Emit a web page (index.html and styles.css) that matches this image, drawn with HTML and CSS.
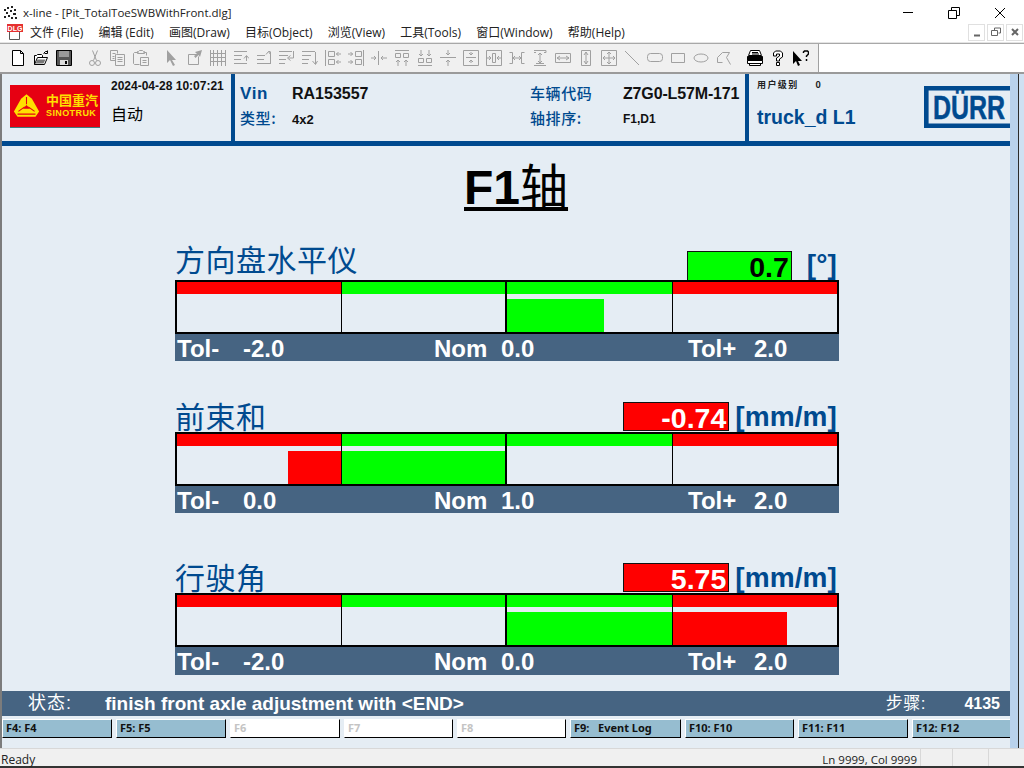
FILE: index.html

```html
<!doctype html>
<html lang="en">
<head>
  <meta charset="UTF-8">
  <title>x-line - [Pit_TotalToeSWBWithFront.dlg]</title>
  <link rel="stylesheet" href="styles.css">
</head>
<body>
  <svg class="defs" width="0" height="0">
    <symbol id="i-new" viewBox="0 0 16 16"><path d="M2.500 .5h8l3 3v12h-11zM10.500 .5v3h3" fill="#fff" stroke="#000"/></symbol>
    <symbol id="i-open" viewBox="0 0 16 16"><path d="M1.500 14.500v-9h2l1-1h4l1 1v2M1.500 14.500l3-7h10l-3 7z" fill="#fff" stroke="#000"/><path d="M4.500 9.500h8l-2 4h-8z" fill="#777"/><path d="M10.500 3.500l2-2h2M14.500 .5v3h-3" fill="none" stroke="#000"/></symbol>
    <symbol id="i-save" viewBox="0 0 16 16"><path d="M.5 .5h15v15h-15z" fill="#555" stroke="#000"/><path d="M3 1h10v6h-10z" fill="#999"/><path d="M4 10h8v5h-8z" fill="#ddd"/><path d="M9 11h2v3h-2z" fill="#000"/></symbol>
    <symbol id="i-cut" viewBox="0 0 16 16"><path d="M5.500 .5l4 10M10.500 .5l-4 10" /><circle cx="5" cy="13" r="2.500"/><circle cx="11" cy="13" r="2.500"/></symbol>
    <symbol id="i-copy" viewBox="0 0 16 16"><path d="M.5 .5h7v3M.5 .5v10h5M6.500 4.500h8v11h-9v-11zM2.500 3.500h3M2.500 6.500h2M2.500 8.500h2M7.500 7.500h5M7.500 9.500h5M7.500 11.500h5"/></symbol>
    <symbol id="i-paste" viewBox="0 0 16 16"><path d="M5.500 2.500h-4l-1 1v10l1 1h5M10.500 2.500h3v3M4.500 3.500v-2h1l1-1h3l1 1h1v2zM7.500 7.500h8v8h-8zM9.500 10.500h4M9.500 12.500h4"/></symbol>
    <symbol id="i-arrow" viewBox="0 0 16 16"><path d="M3 0v13l3-3 3 6 2-1-3-5h4z" fill="#a0a0a0" stroke="none"/></symbol>
    <symbol id="i-object" viewBox="0 0 16 16"><path d="M1.500 4.500h9M1.500 4.500v10h10v-8"/><path d="M8 2l7-2-2 7-1.500-2-3 3-1.500-2 3-2z" fill="#a0a0a0" stroke="none"/></symbol>
    <symbol id="i-grid" viewBox="0 0 16 16"><path d="M3.500 0v16M7.500 0v16M11.500 0v16M0 3.500h16M0 7.500h16M0 11.500h16M.5 0v16M15.500 0v16"/></symbol>
    <symbol id="i-a1" viewBox="0 0 16 16"><path d="M1 1.500h13M1 5.500h8M1 9.500h7M1 13.500h13M13.500 11v-5M11 8.500l2.500-3 2.500 3"/></symbol>
    <symbol id="i-a2" viewBox="0 0 16 16"><path d="M1 5.500h8M1 9.500h7M1 13.500h14M14.500 13v-11M12.500 1.500h2M10 4.500l2.500-3 2 3"/></symbol>
    <symbol id="i-a3" viewBox="0 0 16 16"><path d="M0 1.500h13M0 5.500h9M0 9.500h7M0 13.500h6M14.500 1v7h-5M11.500 5.500l-3 2.500 3 2.500"/></symbol>
    <symbol id="i-a4" viewBox="0 0 16 16"><path d="M0 1.500h13M0 5.500h9M0 9.500h7M0 13.500h6M13.500 2v12M10.500 11l3 3.500 2-3.500"/></symbol>
    <symbol id="i-b1" viewBox="0 0 16 16"><path d="M.5 0v16M3.500 1.500h6v5h-6zM3.500 9.500h6v5h-6zM11 4h5M11.500 4l2-2M11.500 4l2 2M11 12h5M11.500 12l2-2M11.500 12l2 2"/></symbol>
    <symbol id="i-b2" viewBox="0 0 16 16"><path d="M15.500 0v16M7.500 1.500h6v5h-6zM7.500 9.500h6v5h-6zM0 4h5M4.500 4l-2-2M4.500 4l-2 2M0 12h5M4.500 12l-2-2M4.500 12l-2 2"/></symbol>
    <symbol id="i-b3" viewBox="0 0 16 16"><path d="M7.500 1v14M0 8h5M5 8l-2-2M5 8l-2 2M10 8h6M10 8l2-2M10 8l2 2"/></symbol>
    <symbol id="i-c1" viewBox="0 0 16 16"><path d="M1 .5h14M1.500 3.500h5v4h-5zM9.500 3.500h5v4h-5zM4 10v6M4 10l-2 2M4 10l2 2M12 10v6M12 10l-2 2M12 10l2 2"/></symbol>
    <symbol id="i-c2" viewBox="0 0 16 16"><path d="M1 15.500h14M1.500 8.500h5v4h-5zM9.500 8.500h5v4h-5zM4 0v6M4 6l-2-2M4 6l2-2M12 0v6M12 6l-2-2M12 6l2-2"/></symbol>
    <symbol id="i-c3" viewBox="0 0 16 16"><path d="M0 7.500h16M8 0v5M8 5l-2-2M8 5l2-2M8 10v6M8 10l-2 2M8 10l2 2"/></symbol>
    <symbol id="i-d1" viewBox="0 0 16 16"><path d="M.5 .5h15v15h-15zM3 7.500h10M8 2v3M8 5l-2-2M8 5l2-2M8 10v3M8 10l-2 2M8 10l2 2"/></symbol>
    <symbol id="i-d2" viewBox="0 0 16 16"><path d="M.5 .5h15v15h-15zM6.500 3.500h3v9h-3zM1 8h4M5 8l-2-2M5 8l-2 2M11 8h4M11 8l2-2M11 8l2 2"/></symbol>
    <symbol id="i-e1" viewBox="0 0 16 16"><path d="M.5 2.500h3v11h-3M15.500 2.500h-3v11h3M4 8h8M4 8l2-2M4 8l2 2M12 8l-2-2M12 8l-2 2"/></symbol>
    <symbol id="i-e2" viewBox="0 0 16 16"><path d="M2 .5h12v2h-2M4 2.500h-2M2 15.500h12M4 13.500h8M8 3v10M8 3l-2 2M8 3l2 2M8 13l-2-2M8 13l2-2"/></symbol>
    <symbol id="i-e3" viewBox="0 0 16 16"><path d="M.5 3.500h15v9h-15zM2 8h12M2 8l3-2M2 8l3 2M14 8l-3-2M14 8l-3 2"/></symbol>
    <symbol id="i-e4" viewBox="0 0 16 16"><path d="M3.500 .5h9v15h-9zM8 2v12M8 2l-2 3M8 2l2 3M8 14l-2-3M8 14l2-3"/></symbol>
    <symbol id="i-e5" viewBox="0 0 16 16"><path d="M.5 .5h15v15h-15zM2 8h12M8 2v12M2 8l2-2M2 8l2 2M14 8l-2-2M14 8l-2 2M8 2l-2 2M8 2l2 2M8 14l-2-2M8 14l2-2"/></symbol>
    <symbol id="i-line" viewBox="0 0 16 16"><path d="M1 1l14 14"/></symbol>
    <symbol id="i-round" viewBox="0 0 16 16"><rect x=".5" y="3.500" width="15" height="8" rx="3"/></symbol>
    <symbol id="i-rect" viewBox="0 0 16 16"><path d="M1.500 3.500h13v9h-13z"/></symbol>
    <symbol id="i-oval" viewBox="0 0 16 16"><ellipse cx="8" cy="8" rx="7" ry="4"/></symbol>
    <symbol id="i-poly" viewBox="0 0 16 16"><path d="M6.500 2.500h7l-3 5 4 7M6.500 2.500l-5 5v5h5"/></symbol>
    <symbol id="i-print" viewBox="0 0 16 16"><path d="M3.500 .5h9l2 5h-13zM5 2.500h6M5 4h7" fill="#fff" stroke="#000"/><path d="M.5 6.500h15v4h-15z" fill="#000" stroke="#000"/><path d="M.5 10.500h15v3h-15zM2.500 13.500h11v2h-11z" fill="#fff" stroke="#000"/></symbol>
    <symbol id="i-help" viewBox="0 0 16 16"><path d="M3.500 6v-3l2-2h5l2 2v4l-3 2v2h-3v-3l3-2v-2h-3v2z" fill="#fff" stroke="#000"/><path d="M6.500 12.500h3v3h-3z" fill="#fff" stroke="#000"/></symbol>
    <symbol id="i-whats" viewBox="0 0 16 16"><path d="M0 1v13l3-3 2 5 2-1-2-4h4z" fill="#000"/><path d="M10.500 3v-1l1-1h3l1 1v2l-2 2v1M13.500 9v2" fill="none" stroke="#000" stroke-width="1.500"/></symbol>
  </svg>

  <div class="titlebar">
    <svg class="app-icon" viewBox="0 0 14 14" width="14" height="14"><path d="M1 3h2v2h-2zM4 1h2v2h-2zM8 0h2v2h-2zM11 3h2v2h-2zM3 6h2v2h-2zM7 4h2v2h-2zM10 7h3v2h-3zM1 10h2v2h-2zM5 9h2v2h-2zM8 11h2v2h-2zM12 11h2v2h-2z" fill="#222"/></svg>
    <span class="app-name">x-line - [Pit_TotalToeSWBWithFront.dlg]</span>
    <div class="win-btns">
      <svg viewBox="0 0 10 10" width="10" height="10"><path d="M0 5.500h10" stroke="#000" fill="none"/></svg>
      <svg viewBox="0 0 12 12" width="12" height="12"><path d="M.5 3.500h8v8h-8zM3.500 3v-2.500h8v8h-3" stroke="#000" fill="none"/></svg>
      <svg viewBox="0 0 12 12" width="12" height="12"><path d="M1 1l10 10M11 1l-10 10" stroke="#000" fill="none"/></svg>
    </div>
  </div>

  <div class="menubar">
    <svg class="dlg-icon" viewBox="0 0 16 16" width="16" height="16"><path d="M2.500 7.500v8h10v-8" fill="#fff" stroke="#555"/><path d="M0 0h16v8h-16z" fill="#e53030"/></svg>
    <span class="dlg-text">DLG</span>
    <div class="menu-items">
      <span>文件 (File)</span>
      <span>编辑 (Edit)</span>
      <span>画图(Draw)</span>
      <span>目标(Object)</span>
      <span>浏览(View)</span>
      <span>工具(Tools)</span>
      <span>窗口(Window)</span>
      <span>帮助(Help)</span>
    </div>
    <div class="mdi-btns">
      <div class="mdi-btn"><svg viewBox="0 0 10 10" width="10" height="10"><path d="M2 8.500h6" stroke="#666" stroke-width="2" fill="none"/></svg></div>
      <div class="mdi-btn"><svg viewBox="0 0 10 10" width="10" height="10"><path d="M.5 3.500h6v5h-6zM3.500 3v-2h6v5h-2" stroke="#666" fill="none"/></svg></div>
      <div class="mdi-btn"><svg viewBox="0 0 10 10" width="10" height="10"><path d="M2 2l6 6M8 2l-6 6" stroke="#666" stroke-width="2" fill="none"/></svg></div>
    </div>
  </div>

  <div class="toolbar">
    <div class="tools">
      <svg class="tool"><use href="#i-new"/></svg>
      <svg class="tool"><use href="#i-open"/></svg>
      <svg class="tool"><use href="#i-save"/></svg>
    </div>
    <div class="tools off">
      <svg class="tool"><use href="#i-cut"/></svg>
      <svg class="tool"><use href="#i-copy"/></svg>
      <svg class="tool"><use href="#i-paste"/></svg>
    </div>
    <div class="tools off">
      <svg class="tool"><use href="#i-arrow"/></svg>
      <svg class="tool"><use href="#i-object"/></svg>
      <svg class="tool"><use href="#i-grid"/></svg>
      <svg class="tool"><use href="#i-a1"/></svg>
      <svg class="tool"><use href="#i-a2"/></svg>
      <svg class="tool"><use href="#i-a3"/></svg>
      <svg class="tool"><use href="#i-a4"/></svg>
      <svg class="tool"><use href="#i-b1"/></svg>
      <svg class="tool"><use href="#i-b2"/></svg>
      <svg class="tool"><use href="#i-b3"/></svg>
      <svg class="tool"><use href="#i-c1"/></svg>
      <svg class="tool"><use href="#i-c2"/></svg>
      <svg class="tool"><use href="#i-c3"/></svg>
      <svg class="tool"><use href="#i-d1"/></svg>
      <svg class="tool"><use href="#i-d2"/></svg>
      <svg class="tool"><use href="#i-e1"/></svg>
      <svg class="tool"><use href="#i-e2"/></svg>
      <svg class="tool"><use href="#i-e3"/></svg>
      <svg class="tool"><use href="#i-e4"/></svg>
      <svg class="tool"><use href="#i-e5"/></svg>
      <svg class="tool"><use href="#i-line"/></svg>
      <svg class="tool"><use href="#i-round"/></svg>
      <svg class="tool"><use href="#i-rect"/></svg>
      <svg class="tool"><use href="#i-oval"/></svg>
      <svg class="tool"><use href="#i-poly"/></svg>
    </div>
    <div class="tools">
      <svg class="tool"><use href="#i-print"/></svg>
      <svg class="tool"><use href="#i-help"/></svg>
      <svg class="tool"><use href="#i-whats"/></svg>
    </div>
  </div>

  <div class="workspace">
    <div class="panel">
      <div class="header">
        <div class="head-left">
          <div class="logo">
            <svg class="logo-mark" viewBox="0 0 30 28" width="27" height="26">
              <path d="M15 1l6 5 8 14-4 6h-20l-4-6 8-14z" fill="#ffe000"/>
              <path d="M15 4v8M6 20l7-5M24 20l-7-5M5 23h20" stroke="#e60012" stroke-width="1.200" fill="none"/>
              <path d="M15 13l4 4h-8z" fill="#e60012"/>
            </svg>
            <div class="logo-text">
              <span class="logo-cn">中国重汽</span>
              <span class="logo-en">SINOTRUK</span>
            </div>
          </div>
          <div class="stamp">
            <div class="date">2024-04-28 10:07:21</div>
            <div class="mode">自动</div>
          </div>
        </div>
        <div class="head-mid">
          <span class="key big">Vin</span>
          <span class="val big">RA153557</span>
          <span class="key">车辆代码</span>
          <span class="val big code">Z7G0-L57M-171</span>
          <span class="key">类型:</span>
          <span class="val axle">4x2</span>
          <span class="key">轴排序:</span>
          <span class="val">F1,D1</span>
        </div>
        <div class="head-right">
          <div class="user">
            <div class="user-level"><span>用户级别</span><span>0</span></div>
            <div class="user-name">truck_d L1</div>
          </div>
          <svg class="durr" viewBox="0 0 86 42" width="86" height="42">
            <path d="M86 2.300h-83.700v37.400h83.700" fill="none" stroke="#004a8f" stroke-width="4.600"/>
            <text transform="translate(9 33) scale(.757 1)">DÜRR</text>
          </svg>
        </div>
      </div>

      <div class="title">F1<span class="title-cn">轴</span></div>

      <div class="gauges">
        <section class="gauge">
          <div class="gauge-top">
            <div class="gauge-label raised">方向盘水平仪</div>
            <div class="gauge-value ok">0.7</div>
            <div class="gauge-unit far">[°]</div>
          </div>
          <div class="bar">
            <div class="seg"><div class="zone red"></div></div>
            <div class="seg thick"><div class="zone green"></div></div>
            <div class="seg"><div class="zone green"></div><div class="fill green" style="width: 59%"></div></div>
            <div class="seg last"><div class="zone red"></div></div>
          </div>
          <div class="limits">
            <span>Tol-</span><span>-2.0</span><span>Nom</span><span>0.0</span><span>Tol+</span><span>2.0</span>
          </div>
        </section>

        <section class="gauge">
          <div class="gauge-top">
            <div class="gauge-label">前束和</div>
            <div class="gauge-value bad">-0.74</div>
            <div class="gauge-unit">[mm/m]</div>
          </div>
          <div class="bar">
            <div class="seg"><div class="zone red"></div><div class="fill red to-right" style="width: 32.500%"></div></div>
            <div class="seg thick"><div class="zone green"></div><div class="fill green" style="width: 100%"></div></div>
            <div class="seg"><div class="zone green"></div></div>
            <div class="seg last"><div class="zone red"></div></div>
          </div>
          <div class="limits">
            <span>Tol-</span><span>0.0</span><span>Nom</span><span>1.0</span><span>Tol+</span><span>2.0</span>
          </div>
        </section>

        <section class="gauge gauge-low">
          <div class="gauge-top">
            <div class="gauge-label">行驶角</div>
            <div class="gauge-value bad">5.75</div>
            <div class="gauge-unit">[mm/m]</div>
          </div>
          <div class="bar">
            <div class="seg"><div class="zone red"></div></div>
            <div class="seg thick"><div class="zone green"></div></div>
            <div class="seg"><div class="zone green"></div><div class="fill green" style="width: 100%"></div></div>
            <div class="seg last"><div class="zone red"></div><div class="fill red" style="width: 69.500%"></div></div>
          </div>
          <div class="limits tall">
            <span>Tol-</span><span>-2.0</span><span>Nom</span><span>0.0</span><span>Tol+</span><span>2.0</span>
          </div>
        </section>
      </div>

      <div class="status">
        <span class="status-key">状态:</span>
        <span class="status-msg">finish front axle adjustment with &lt;END&gt;</span>
        <span class="step-key">步骤:</span>
        <span class="step-val">4135</span>
      </div>

      <div class="fkeys">
        <div class="fkey">F4: F4</div>
        <div class="fkey">F5: F5</div>
        <div class="fkey off">F6</div>
        <div class="fkey off">F7</div>
        <div class="fkey off">F8</div>
        <div class="fkey">F9: &nbsp; Event Log</div>
        <div class="fkey">F10: F10</div>
        <div class="fkey">F11: F11</div>
        <div class="fkey">F12: F12</div>
      </div>
    </div>
    <div class="edge"></div>
  </div>

  <div class="statusbar">
    <span class="ready">Ready</span>
    <span class="cell pos">Ln 9999, Col 9999</span>
    <span class="cell w32"></span>
    <span class="cell w36"></span>
    <span class="cell w35"></span>
  </div>
  <div class="taskline"></div>
</body>
</html>
```

FILE: styles.css

```css
* {
  box-sizing: border-box;
}

body {
  margin: 0;
  width: 1024px;
  height: 768px;
  overflow: hidden;
  background: #fff;
  font-family: "Open Sans", "Noto Sans CJK SC", sans-serif;
  font-size: 12px;
  color: #222;
}

.defs {
  display: block;
  height: 0;
}

/* window chrome */
.titlebar {
  height: 22px;
  display: flex;
  align-items: center;
  padding: 3px 0 0 3px;
}

.app-name {
  margin-left: 6px;
  font-size: 11.500px;
}

.win-btns {
  margin-left: auto;
  width: 121px;
  display: flex;
  justify-content: space-between;
  padding-right: 18px;
}

.menubar {
  height: 21px;
  display: flex;
  align-items: center;
  padding-left: 7px;
  border-bottom: 1px solid #e4e4e4;
}

.dlg-text {
  margin-left: -16px;
  width: 16px;
  margin-top: -8px;
  font: bold 7px "Liberation Sans", sans-serif;
  color: #fff;
  text-align: center;
}

.menu-items {
  margin-left: 7px;
  display: flex;
  gap: 15.200px;
}

.mdi-btns {
  margin-left: auto;
  display: flex;
  gap: 2px;
  padding-right: 1px;
}

.mdi-btn {
  width: 17px;
  height: 17px;
  border: 1px solid #e0e0e0;
  display: flex;
  align-items: center;
  justify-content: center;
}

.toolbar {
  height: 31px;
  display: flex;
  align-items: center;
  gap: 8px;
  padding: 0 0 1px 6px;
  border-top: 1px solid #a8a8a8;
  border-bottom: 2px solid #9a9a9a;
  background: linear-gradient(to right, #f0f0f0 818px, #a0a0a0 818px, #a0a0a0 819px, #fff 819px);
}

.tools {
  display: flex;
}

.tool {
  width: 16px;
  height: 16px;
  margin: 0 3.500px;
  flex: none;
  overflow: visible;
}

.off .tool {
  fill: none;
  stroke: #a0a0a0;
}

/* main panel */
.workspace {
  height: 674px;
  display: flex;
}

.panel {
  width: 1010px;
  background: #e5edf4;
  border-left: 2px solid #7c7c7c;
}

.edge {
  flex: 1;
  background: linear-gradient(to right, #b9d2ec 8px, #2b2b2b 8px, #2b2b2b 9px, #cfe0f2 9px);
}

.header {
  height: 72px;
  display: flex;
  border-bottom: 5px solid #004a8f;
}

.head-left {
  width: 233px;
  display: flex;
  padding: 4px 0 0 8px;
  border-right: 4px solid #004a8f;
}

.logo {
  width: 90px;
  height: 43px;
  margin-top: 7px;
  display: flex;
  align-items: center;
  gap: 6px;
  padding-left: 3px;
  background: #e60012;
  border-bottom: 1px solid #3d7c80;
}

.logo-mark {
  flex: none;
}

.logo-text {
  display: flex;
  flex-direction: column;
  color: #ffe000;
  font-weight: bold;
  line-height: 1;
}

.logo-cn {
  font-size: 13px;
  white-space: nowrap;
}

.logo-en {
  margin-top: 1px;
  font: bold 9px "Liberation Sans", sans-serif;
  letter-spacing: .4px;
}

.stamp {
  margin-left: 11px;
}

.date {
  font: bold 12px/16px "Liberation Sans", sans-serif;
  color: #111;
  white-space: nowrap;
}

.mode {
  margin-top: 9px;
  font-size: 16px;
  line-height: 22px;
  color: #000;
}

.head-mid {
  width: 514px;
  padding: 8px 0 0 5px;
  display: grid;
  grid-template-columns: 52px 238px 93px 1fr;
  grid-template-rows: 24px 24px;
  row-gap: 1px;
  align-items: center;
  border-right: 4px solid #004a8f;
  font-family: "Liberation Sans", "Noto Sans CJK SC", sans-serif;
}

.key {
  margin-top: -3px;
  font-size: 15px;
  font-weight: 500;
  letter-spacing: .6px;
  color: #004a8f;
  font-family: "Noto Sans CJK SC", sans-serif;
  white-space: nowrap;
}

.key.big {
  margin-top: 0;
  font: bold 17px "Liberation Sans", sans-serif;
}

.val {
  font: bold 12px "Liberation Sans", sans-serif;
  color: #111;
}

.val.big {
  font-size: 16px;
}

.val.code {
  letter-spacing: -.15px;
}

.val.axle {
  font-size: 13px;
}

.head-right {
  flex: 1;
  display: flex;
  justify-content: space-between;
  padding: 5px 0 0 8px;
}

.user-level {
  display: flex;
  gap: 17px;
  font: bold 9px/12px "Noto Sans CJK SC", sans-serif;
  color: #222;
}

.user-level span:first-child {
  letter-spacing: 1.400px;
}

.user-name {
  margin-top: 14px;
  font: bold 19.500px/24px "Liberation Sans", sans-serif;
  color: #004a8f;
}

.durr {
  margin-top: 7px;
  flex: none;
}

.durr text {
  font: bold 33px "Liberation Sans", sans-serif;
  fill: #004a8f;
  stroke: #004a8f;
  stroke-width: .5px;
}

.title {
  margin: 14px 0 0 462px;
  height: 60px;
  font: bold 48px/56px "Liberation Sans", "Noto Sans CJK SC", sans-serif;
  color: #000;
  text-decoration: underline;
}

.title-cn {
  font-weight: normal;
}

.gauges {
  margin: 31px 0 0 173px;
  width: 664px;
}

.gauge + .gauge {
  margin-top: 42px;
}

.gauge-low.gauge {
  margin-top: 51px;
}

.gauge-top {
  height: 29px;
  display: flex;
  align-items: flex-end;
  justify-content: flex-end;
  padding-right: 2px;
}

.gauge-label {
  margin-right: auto;
  font-size: 30px;
  line-height: 30px;
  letter-spacing: .5px;
  color: #004a8f;
  white-space: nowrap;
}

.gauge-label.raised {
  margin-bottom: 5px;
}

.gauge-value {
  width: 106px;
  height: 29px;
  padding-right: 2px;
  border: 1px solid #111;
  text-align: right;
  font: bold 28.500px/30px "Liberation Sans", sans-serif;
}

.gauge-value.ok {
  width: 105px;
  background: #00ff00;
  color: #000;
  border-bottom: 0;
}

.gauge-value.bad {
  margin-bottom: 1px;
  background: #ff0000;
  color: #fff;
}

.gauge-unit {
  margin-left: 6px;
  font: bold 28px/30px "Liberation Sans", sans-serif;
  letter-spacing: .1px;
  color: #004a8f;
}

.gauge-unit.far {
  margin-left: 15px;
}

.bar {
  height: 54px;
  display: grid;
  grid-template-columns: 165px 165px 166px 1fr;
  border: 2px solid #000;
}

.seg {
  border-right: 1px solid #000;
}

.seg.thick {
  border-right-width: 2px;
}

.seg.last {
  border-right: 0;
}

.zone {
  height: 12px;
}

.fill {
  height: 33px;
  margin-top: 5px;
}

.fill.to-right {
  margin-left: auto;
}

.red {
  background: #ff0000;
}

.green {
  background: #00ff00;
}

.limits {
  height: 27px;
  display: grid;
  grid-template-columns: 66px 191px 67px 187px 66px 1fr;
  padding-left: 2px;
  background: #466482;
  color: #fff;
  font: bold 24px/30px "Liberation Sans", sans-serif;
}

.limits.tall {
  height: 28px;
}

.status {
  margin-top: 16px;
  height: 25px;
  display: flex;
  align-items: center;
  background: #466482;
  color: #fff;
  font: bold 19px/25px "Liberation Sans", "Noto Sans CJK SC", sans-serif;
}

.status-key {
  width: 103px;
  padding-left: 26px;
  font-weight: normal;
  font-size: 18px;
  letter-spacing: 1px;
}

.step-key {
  margin-left: auto;
  margin-right: 10px;
  font-size: 17px;
  letter-spacing: .5px;
  font-weight: normal;
}

.step-val {
  width: 74px;
  padding-right: 10px;
  text-align: right;
  font-size: 16px;
}

.fkeys {
  margin-top: 3px;
  display: grid;
  grid-template-columns: 114px 114px 114px 113px 113px 115px 113px 114px 1fr;
}

.fkey {
  height: 19px;
  margin-right: 4px;
  padding-left: 3px;
  background: #96bdd0;
  border-top: 1px solid #fff;
  border-left: 1px solid #fff;
  border-right: 1px solid #000;
  border-bottom: 1px solid #000;
  font: bold 11px/15px "Noto Sans", sans-serif;
  color: #111;
  white-space: nowrap;
}

.fkey:last-child {
  margin-right: 0;
  border-right: 0;
}

.fkey.off {
  background: #fff;
  color: #c4c4c4;
}

/* bottom status bar */
.statusbar {
  height: 18px;
  display: flex;
  justify-content: flex-end;
  background: #f0f0f0;
  border-top: 1px solid #d8d8d8;
  line-height: 22px;
}

.ready {
  margin-right: auto;
  padding-left: 1px;
}

.cell {
  height: 17px;
  text-align: right;
  padding-right: 3px;
  border-right: 1px solid #d8d8d8;
}

.cell.pos {
  font-size: 11.500px;
}

.cell.w32 {
  width: 32px;
}

.cell.w36 {
  width: 36px;
}

.cell.w35 {
  width: 35px;
  border-right: 0;
}

.taskline {
  height: 2px;
  background: #333;
}
```
